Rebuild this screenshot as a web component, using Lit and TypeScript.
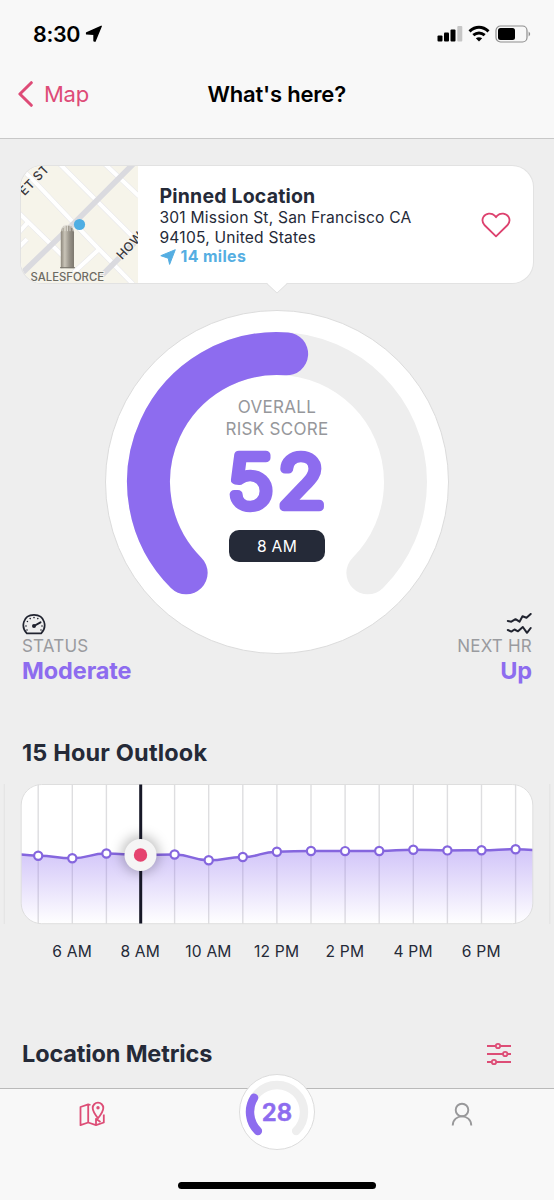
import { LitElement, html, svg, css } from "lit";
import { customElement, property } from "lit/decorators.js";

/** Point on a circle; angle in degrees, clockwise from twelve o'clock. */
const polar = (c: number, r: number, deg: number): string => {
  const a = (deg * Math.PI) / 180;
  return `${(c + r * Math.sin(a)).toFixed(2)} ${(c - r * Math.cos(a)).toFixed(2)}`;
};

const arc = (c: number, r: number, from: number, to: number): string =>
  `M${polar(c, r, from)}A${r} ${r} 0 ${to - from > 180 ? 1 : 0} 1 ${polar(c, r, to)}`;

@customElement("risk-dial")
export class RiskDial extends LitElement {
  @property({ type: Number }) size = 344;
  @property({ type: Number }) radius = 128.5;
  @property({ type: Number }) thickness = 43;
  @property({ type: Number }) end = 0;

  static styles = css`
    :host { display: block; }
    svg { display: block; }
    .face { fill: #fff; stroke: #dcdcdc; stroke-width: 1; }
    .track, .value { fill: none; stroke-linecap: round; }
    .track { stroke: #eee; }
    .value { stroke: #8d6cef; }
  `;

  render() {
    const c = this.size / 2;
    return html`<svg width=${this.size} height=${this.size}>
      <circle class="face" cx=${c} cy=${c} r=${c - 0.5}></circle>
      <path class="track" stroke-width=${this.thickness} d=${arc(c, this.radius, -135, 135)}></path>
      <path class="value" stroke-width=${this.thickness} d=${arc(c, this.radius, -135, this.end)}></path>
    </svg>`;
  }
}

@customElement("outlook-chart")
export class OutlookChart extends LitElement {
  private readonly first = 38.2;
  private readonly step = 34.1;
  private readonly selected = 3;
  private readonly values = [71.7, 74.3, 69.5, 71, 70.5, 76.3, 73, 67.7, 67, 67.1, 67, 65.7, 66.4, 66.3, 65.2];
  private readonly labels = ["6 AM", "8 AM", "10 AM", "12 PM", "2 PM", "4 PM", "6 PM"];

  static styles = css`
    :host { display: block; }
    svg { display: block; overflow: visible; }
    .plot { fill: #fff; }
    .outline { fill: none; stroke: #dedede; stroke-width: 1; }
    .grid { stroke: #dedee0; stroke-width: 1.4; }
    .faint { stroke: #e5e5e5; stroke-width: 1.4; }
    .curve { fill: none; stroke: #8566de; stroke-width: 2.5; }
    .dot { fill: #fff; stroke: #8566de; stroke-width: 2.2; }
    .cursor { stroke: #171827; stroke-width: 3; }
    .knob { fill: #f5f5f5; }
    .pin { fill: #e5436f; }
    .labels { display: flex; padding-left: 38px; margin-top: 15px; }
    .label {
      width: 68.2px; flex: none; text-align: center; color: #252a38;
      font-size: 15.6px; line-height: 25px; letter-spacing: 0.2px;
    }
  `;

  render() {
    const pts = this.values.map((y, i) => [this.first + i * this.step, y]);
    const all = [[4.1, 69.5], ...pts, [549.8, 67]];
    let d = `M${all[0][0]} ${all[0][1]}`;
    for (let i = 1; i < all.length; i++) {
      const [px, py] = all[i - 1];
      const [x, y] = all[i];
      const m = (px + x) / 2;
      d += `C${m} ${py} ${m} ${y} ${x} ${y}`;
    }
    const cx = pts[this.selected][0];
    return html`
      <svg width="554" height="140">
        <defs>
          <linearGradient id="fade" x1="0" y1="65" x2="0" y2="140" gradientUnits="userSpaceOnUse">
            <stop offset="0" stop-color="#8d6cef" stop-opacity=".4"></stop>
            <stop offset="1" stop-color="#8d6cef" stop-opacity="0"></stop>
          </linearGradient>
          <clipPath id="clip"><rect x="21" y="0" width="512" height="140" rx="21"></rect></clipPath>
          <filter id="soft" x="-60%" y="-60%" width="220%" height="220%">
            <feGaussianBlur stdDeviation="6"></feGaussianBlur>
          </filter>
        </defs>
        <path class="faint" d="M4.3 0V140M549.8 0V140"></path>
        <rect class="plot" x="21" y="0" width="512" height="140" rx="21"></rect>
        <g clip-path="url(#clip)">
          ${pts.map(([x]) => svg`<path class="grid" d="M${x} 0V140"></path>`)}
          <path d="${d}V140H4Z" fill="url(#fade)"></path>
          <path class="curve" d=${d}></path>
          ${pts.map(([x, y]) => svg`<circle class="dot" cx=${x} cy=${y} r="4.1"></circle>`)}
        </g>
        <rect class="outline" x="21.2" y="0.5" width="511.6" height="139.2" rx="20.5"></rect>
        <circle cx=${cx} cy="70.5" r="19" fill="#000" fill-opacity=".24" filter="url(#soft)"></circle>
        <path class="cursor" d="M${cx + 0.2} 0.5V139.5"></path>
        <circle class="knob" cx=${cx} cy="71" r="16"></circle>
        <circle class="pin" cx=${cx} cy="71" r="6.7"></circle>
      </svg>
      <div class="labels">${this.labels.map((l) => html`<span class="label">${l}</span>`)}</div>
    `;
  }
}

@customElement("map-thumb")
export class MapThumb extends LitElement {
  static styles = css`
    :host { display: block; }
    svg { display: block; }
    .street { fill: none; stroke: #fff; stroke-width: 4; }
    .edge { fill: none; stroke: #e8e8eb; stroke-width: 5.2; }
    .main { fill: none; stroke: #dadadf; stroke-width: 5.6; }
    text { font-family: Inter, sans-serif; paint-order: stroke; stroke: #f6f4ee; stroke-width: 2px; }
    .road { font-size: 12.5px; fill: #37373b; letter-spacing: 0.3px; font-weight: 500; }
    .place { font-size: 11.3px; fill: #6d6b62; font-weight: 500; }
  `;

  render() {
    const streets =
      "M0 3L17 20L52 57L77 83L112 119M38 -2L75 35L118 78M83 -2L118 31M-2 48L34 83L46 95M77 85L52 108M-2 67L7 57M-2 82L6 74M77 83L95 101";
    return html`<svg width="117" height="117" viewBox="0 0.8 117 117">
      <defs>
        <linearGradient id="tower"><stop offset="0" stop-color="#8d877b"></stop>
          <stop offset=".3" stop-color="#c9c4b8"></stop><stop offset=".65" stop-color="#99948a"></stop>
          <stop offset="1" stop-color="#7c776e"></stop></linearGradient>
      </defs>
      <rect width="117" height="118" fill="#f6f4ea"></rect>
      <path class="edge" d=${streets}></path>
      <path class="street" d=${streets}></path>
      <path class="main" d="M114 -3L54 57L30 80L-2 111M119 72L80 111"></path>
      <text class="road" transform="translate(3.500 31) rotate(-46)">ET ST</text>
      <text class="road" transform="translate(101 95) rotate(-47)">HOW</text>
      <path d="M39.800 103V67Q40.500 61 44 60H49Q52 61 53 67V103Z" fill="url(#tower)"></path>
      <path d="M41 66V62H43V60H50V62H52V66M44 60V66M46.500 60V66M49 60V66" fill="none" stroke="#efede6" stroke-width=".7"></path>
      <path d="M39 102.500H54" stroke="#77736b" stroke-width="1"></path>
      <circle cx="58.500" cy="59.300" r="5.600" fill="#4faee3"></circle>
      <text class="place" x="9.500" y="116">SALESFORCE</text>
    </svg>`;
  }
}

@customElement("app-root")
export class AppRoot extends LitElement {
  static styles = css`
    :host {
      display: flex; flex-direction: column; width: 554px; height: 1200px; overflow: hidden;
      background: #eee; color: #252a38; font-family: Inter, "Liberation Sans", sans-serif;
    }
    * { box-sizing: border-box; }
    svg { display: block; flex: none; }
    .header { flex: none; height: 139px; background: #f8f8f8; border-bottom: 1px solid #c8c8c8; color: #000; }
    .status-bar { display: flex; align-items: center; height: 50px; padding: 17px 23px 0 33px; }
    .clock { font-size: 21.500px; font-weight: 600; line-height: 26px; letter-spacing: -0.35px; margin-right: 5px; }
    .signals { display: flex; align-items: center; margin-left: auto; gap: 5px; }
    .nav { display: grid; grid-template-columns: 1fr auto 1fr; align-items: center; height: 88px; padding: 0 18px 0 17.500px; }
    .back { display: flex; align-items: center; gap: 11.500px; color: #de4b77; font-size: 22px; letter-spacing: -0.3px; }
    .nav-title { font-size: 22px; font-weight: 600; letter-spacing: -0.2px; }
    .content { flex: none; height: 949px; display: flex; flex-direction: column; }
    .card {
      position: relative; display: flex; width: 512px; height: 117px; margin: 27px 0 0 21px; flex: none;
      background: #fff; border-radius: 21px; box-shadow: 0 0 0 1px #e2e2e2;
    }
    .thumb { width: 117px; height: 117px; border-radius: 21px 0 0 21px; overflow: hidden; }
    .place { flex: 1; padding: 19px 0 0 21.500px; }
    .place-name { font-size: 19.500px; font-weight: 700; line-height: 22px; letter-spacing: 0.18px; margin-bottom: 1px; }
    .address { font-size: 15.600px; line-height: 19.500px; letter-spacing: 0.2px; }
    .distance { display: flex; align-items: center; gap: 5px; color: #55aee2; font-size: 15.900px; font-weight: 700; line-height: 20px; letter-spacing: 0.35px; }
    .heart { align-self: center; margin-right: 22px; }
    .pointer { position: absolute; left: 245px; top: 116px; }
    .overview { display: grid; grid-template-columns: 1fr 1fr; height: 384.500px; margin-top: 26.500px; flex: none; }
    .gauge { grid-area: 1 / 1 / 2 / 3; justify-self: center; align-self: start; display: grid; }
    .gauge > * { grid-area: 1 / 1; }
    .readout { display: flex; flex-direction: column; align-items: center; padding-top: 87.500px; }
    .caption { text-align: center; color: #96979b; font-size: 17px; line-height: 21.500px; letter-spacing: 0.3px; }
    .score { width: 110px; height: 80px; overflow: visible; }
    .score text, .mini text { fill: #8d6cef; stroke: #8d6cef; stroke-linejoin: round; stroke-linecap: round; font-family: Inter, sans-serif; }
    .hour {
      width: 96px; height: 32px; margin-top: 9.500px; border-radius: 10px; background: #252a38; color: #fff;
      text-align: center; font-size: 15.600px; line-height: 33px; letter-spacing: 0.3px;
    }
    .stat { grid-row: 1; align-self: start; padding: 303.500px 22px 0; display: flex; flex-direction: column; }
    .stat.left { grid-column: 1; align-items: flex-start; }
    .stat.right { grid-column: 2; align-items: flex-end; }
    .stat-name { color: #9a9b9f; font-size: 17px; line-height: 20px; margin-top: 1px; letter-spacing: 0.2px; }
    .stat-value { color: #8d6cef; font-size: 23.500px; font-weight: 700; line-height: 30px; letter-spacing: -0.12px; }
    .heading { font-size: 23.500px; font-weight: 700; line-height: 30px; letter-spacing: -0.15px; }
    .outlook { padding: 44px 22px 0; margin-bottom: 16px; letter-spacing: 0.17px; flex: none; }
    .metrics { display: flex; align-items: center; justify-content: space-between; padding: 0 43px 0 22px; margin-top: 75px; }
    .tabs {
      flex: none; height: 112px; background: #f8f8f8; border-top: 1px solid #b9b9b9;
      display: grid; grid-template-columns: 184.600px 184.800px 184.600px; justify-items: center; grid-template-rows: 60px 1fr;
    }
    .tab { padding-top: 12px; }
    .mini { display: grid; margin-top: -15px; height: 76px; }
    .mini > * { grid-area: 1 / 1; }
    .home { grid-column: 1 / 4; align-self: end; width: 198px; height: 7px; margin-bottom: 11px; border-radius: 4px; background: #000; }
  `;

  render() {
    return html`
      <div class="header">
        <div class="status-bar">
          <span class="clock">8:30</span>
          <svg width="18" height="18" viewBox="0 0 18 18"><path d="M16.200 1.300L10 16.200L9 15.800V9.200L1.600 8.900V8Z" fill="#000" stroke="#000" stroke-width="1.400" stroke-linejoin="round"></path></svg>
          <div class="signals">
            <svg width="26" height="17" viewBox="0 0 26 17">
              <rect x="0.500" y="10.500" width="5" height="6" rx="1"></rect><rect x="7" y="7.500" width="5" height="9" rx="1"></rect>
              <rect x="13.500" y="4.500" width="5" height="12" rx="1"></rect><rect x="20.300" y="1" width="5" height="15.500" rx="1" fill="#c6c6c6"></rect>
            </svg>
            <svg width="22" height="17" viewBox="0 0 22 17" fill="none" stroke="#000" stroke-width="3">
              <path d="M1.500 6.300Q6 2.300 11 2.300T20.500 6.300"></path><path d="M5.300 10.200Q8 8 11 8T16.700 10.200"></path>
              <path d="M11 16.500L7.800 13.300Q11 11 14.200 13.300Z" fill="#000" stroke="none"></path>
            </svg>
            <svg width="36" height="18" viewBox="0 0 36 18">
              <rect x="1" y="1" width="31" height="16" rx="4.500" fill="none" stroke="#8e8e8e" stroke-width="1.200"></rect>
              <rect x="3" y="3" width="17" height="12" rx="2.500"></rect><path d="M33.600 6.500Q36.800 9 33.600 11.500Z" fill="#8e8e8e"></path>
            </svg>
          </div>
        </div>
        <div class="nav">
          <div class="back">
            <svg width="15" height="26" viewBox="0 0 15 26"><path d="M13.300 1.700L1.900 13L13.300 24.300" fill="none" stroke="#de4b77" stroke-width="3" stroke-linecap="round" stroke-linejoin="round"></path></svg>
            <span>Map</span>
          </div>
          <span class="nav-title">What's here?</span>
        </div>
      </div>
      <div class="content">
        <div class="card">
          <div class="thumb"><map-thumb></map-thumb></div>
          <div class="place">
            <div class="place-name">Pinned Location</div>
            <div class="address">301 Mission St, San Francisco CA<br />94105, United States</div>
            <div class="distance">
              <svg width="16" height="16" viewBox="0 0 16 16"><path d="M15.300 .7L9.600 15.400L8.200 9.200L.8 6.700Z" fill="#55aee2" stroke="#55aee2" stroke-linejoin="round"></path></svg>
              <span>14 miles</span>
            </div>
          </div>
          <svg class="heart" width="30" height="26" viewBox="0 0 30 26"><path d="M15 24.300L3.400 13Q0.200 9.200 2.300 5.100C4.700 1.200 10.500 .4 13.700 3.700L15 5.200L16.300 3.700C19.500 .4 25.300 1.200 27.700 5.100Q29.800 9.200 26.600 13Z" fill="none" stroke="#dd416e" stroke-width="1.800" stroke-linejoin="round"></path></svg>
          <svg class="pointer" width="22" height="12"><path d="M0 0L11 10.500L22 0Z" fill="#fff"></path><path d="M0 1L11 11L22 1" fill="none" stroke="#e2e2e2"></path></svg>
        </div>
        <div class="overview">
          <div class="gauge">
            <risk-dial .end=${4.3}></risk-dial>
            <div class="readout">
              <div class="caption">OVERALL<br />RISK SCORE</div>
              <svg class="score" viewBox="0 0 110 80">
                <text transform="translate(57 67) scale(1.1 1)" text-anchor="middle" font-size="71" font-weight="200" stroke-width="8.600" letter-spacing="4">52</text>
              </svg>
              <div class="hour">8 AM</div>
            </div>
          </div>
          <div class="stat left">
            <svg width="24" height="22" viewBox="0 0 24 22" fill="none" stroke="#20232f" stroke-width="1.700">
              <path d="M4.800 20.300H19.200C25.200 14.500 23.400 1.800 12 1.800S-1.200 14.500 4.800 20.300Z" stroke-linejoin="round"></path>
              <path d="M12 13L18.500 9.300" stroke-width="2" stroke-linecap="round"></path><circle cx="12" cy="13" r="2" fill="#20232f" stroke="none"></circle>
              <g fill="#20232f" stroke="none"><circle cx="4" cy="13" r=".8"></circle><circle cx="5.400" cy="8.500" r=".8"></circle><circle cx="8.200" cy="5.600" r=".8"></circle><circle cx="12" cy="4.600" r=".8"></circle><circle cx="15.800" cy="5.600" r=".8"></circle><circle cx="5" cy="17" r=".8"></circle><circle cx="20" cy="13" r=".8"></circle><circle cx="19" cy="17" r=".8"></circle></g>
            </svg>
            <span class="stat-name">STATUS</span>
            <span class="stat-value">Moderate</span>
          </div>
          <div class="stat right">
            <svg width="26" height="22" viewBox="0 0 26 22" fill="none" stroke="#20232f" stroke-width="2" stroke-linecap="round" stroke-linejoin="round">
              <path d="M1.800 8L5.300 8.700L9.500 6.200L13.500 8.700L16.500 3.200L20.500 4.700L24.700 1"></path>
              <path d="M1.800 17L5.300 18.600L8.500 16.500L12 18.300L16.800 14L21 19.800L24.700 15"></path>
            </svg>
            <span class="stat-name">NEXT HR</span>
            <span class="stat-value">Up</span>
          </div>
        </div>
        <div class="heading outlook">15 Hour Outlook</div>
        <outlook-chart></outlook-chart>
        <div class="metrics">
          <span class="heading">Location Metrics</span>
          <svg width="24" height="24" viewBox="0 0 24 24" stroke="#dd4d76" stroke-width="2">
            <path d="M0 4H24M0 12H24M0 20H24"></path>
            <g fill="#f4dfe5" stroke-width="1.800"><circle cx="11" cy="4" r="2.200"></circle><circle cx="18.200" cy="12" r="2.200"></circle><circle cx="7" cy="20" r="2.200"></circle></g>
          </svg>
        </div>
      </div>
      <div class="tabs">
        <div class="tab">
          <svg width="26" height="26" viewBox="0 0 26 26" fill="none" stroke="#dd4d76" stroke-width="1.800" stroke-linejoin="round">
            <path d="M11.500 4L9.200 3.400L1.500 6V24.200L9.200 21.500L17 24.200L24.800 21.500V13.500M9.200 3.400V21.500"></path>
            <path d="M19 17.300Q13.700 10.500 13.700 7A5.300 5.300 0 0 1 24.300 7Q24.300 10.500 19 17.300Z"></path>
            <path d="M17 24V17.800L21.500 21"></path><circle cx="19" cy="6.800" r=".8"></circle>
          </svg>
        </div>
        <div class="mini">
          <risk-dial .size=${76} .radius=${27} .thickness=${8.4} .end=${-58}></risk-dial>
          <svg width="76" height="76"><text x="38" y="46.500" text-anchor="middle" font-size="24" font-weight="600" stroke-width=".6">28</text></svg>
        </div>
        <div class="tab">
          <svg width="22" height="26" viewBox="0 0 22 26" fill="none" stroke="#98989a" stroke-width="1.900">
            <circle cx="11" cy="9" r="6.300"></circle><path d="M1.700 24.500C2 12.300 20 12.300 20.300 24.500"></path>
          </svg>
        </div>
        <div class="home"></div>
      </div>
    `;
  }
}
